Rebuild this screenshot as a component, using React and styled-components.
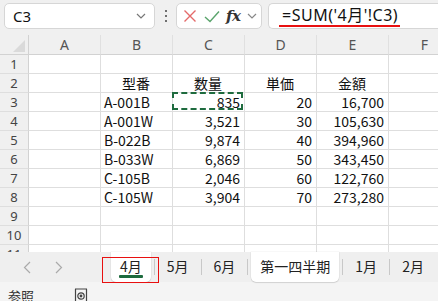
import React from "react";
import styled, { createGlobalStyle } from "styled-components";

const Global = createGlobalStyle`
  html, body { margin: 0; padding: 0; background: #f0f0f0; }
  body { font-family: "Noto Sans", "Noto Sans CJK JP", sans-serif; }
  * { box-sizing: border-box; }
`;

const Page = styled.div`
  width: 438px;
  height: 301px;
  display: flex;
  flex-direction: column;
  overflow: hidden;
  background: #f0f0f0;
`;

const FormulaBar = styled.div`
  height: 35px;
  flex: none;
  display: flex;
  align-items: flex-start;
  padding: 3px 0 0 4px;
`;

const Box = styled.div`
  height: 26px;
  background: #fff;
  border: 1px solid #d6d6d6;
  border-radius: 5px;
  display: flex;
  align-items: center;
  flex: none;
`;

const NameBox = styled(Box)`
  width: 151px;
  padding: 0 8px 0 8px;
  justify-content: space-between;
  font-size: 15px;
  color: #111;
`;

const Dots = styled.div`
  width: 21px;
  height: 26px;
  display: flex;
  flex-direction: column;
  align-items: center;
  justify-content: center;
  gap: 3px;
  flex: none;
  span {
    width: 2px;
    height: 2px;
    background: #444;
    border-radius: 1px;
  }
`;

const FuncBox = styled(Box)`
  width: 86px;
  padding: 0 4px 0 6px;
  justify-content: space-between;
`;

const Fx = styled.span`
  font-family: "DejaVu Serif", "Liberation Serif", serif;
  font-style: italic;
  font-weight: 600;
  font-size: 15px;
  color: #333;
  letter-spacing: -0.5px;
`;

const FormulaBox = styled(Box)`
  margin-left: 6px;
  flex: 1;
  border-right: none;
  border-radius: 5px 0 0 5px;
  padding-left: 10px;
`;

const FormulaText = styled.span`
  font-size: 16px;
  letter-spacing: 0.5px;
  color: #111;
  padding: 0 2px 0 3px;
  border-bottom: 2px solid #e81010;
  line-height: 19px;
  margin-top: 1px;
`;

const Sheet = styled.div`
  flex: 1;
  overflow: hidden;
  background: #fff;
  display: grid;
  grid-template-columns: 29px repeat(6, 72px);
  grid-template-rows: 20px;
  grid-auto-rows: 19px;
  align-content: start;
`;

const Corner = styled.div`
  background: #f0f0f0;
  border-right: 1px solid #d2d2d2;
  border-bottom: 1px solid #d2d2d2;
  display: flex;
  align-items: flex-end;
  justify-content: flex-end;
  padding: 0 3px 2px 0;
`;

const ColHead = styled.div`
  background: #f0f0f0;
  border-bottom: 1px solid #d2d2d2;
  border-right: 1px solid #e0e0e0;
  color: #555;
  font-size: 14px;
  display: flex;
  align-items: center;
  justify-content: center;
  line-height: 1;
  padding-top: 1px;
`;

const RowHead = styled.div`
  background: #f0f0f0;
  border-right: 1px solid #d2d2d2;
  border-bottom: 1px solid #dedede;
  color: #444;
  font-size: 13px;
  display: flex;
  align-items: center;
  justify-content: center;
  line-height: 1;
`;

const Cell = styled.div`
  position: relative;
  border-right: 1px solid #dedede;
  border-bottom: 1px solid #dedede;
  font-family: "Noto Sans CJK JP", sans-serif;
  font-size: 14px;
  color: #111;
  display: flex;
  align-items: center;
  line-height: 18px;
  padding: 0 4px 0 3px;
  white-space: nowrap;
  justify-content: ${(p) =>
    p.$align === "right" ? "flex-end" : p.$align === "center" ? "center" : "flex-start"};
`;

const Marquee = styled.div`
  position: absolute;
  left: -1px;
  top: -1px;
  right: 1px;
  bottom: 1px;
  border: 2px dashed #1e6b3e;
  pointer-events: none;
`;

const TabBar = styled.div`
  height: 30px;
  flex: none;
  background: #efefef;
  display: flex;
  align-items: stretch;
`;

const Nav = styled.div`
  width: 108px;
  flex: none;
  display: flex;
  align-items: center;
  padding-left: 23px;
  gap: 24px;
`;

const TabList = styled.div`
  display: flex;
  align-items: stretch;
  flex: none;
`;

const Tab = styled.div`
  position: relative;
  padding: 0 3px;
  display: flex;
  align-items: stretch;
`;

const TabLabel = styled.div`
  position: relative;
  padding: 0 9px 2px;
  display: flex;
  align-items: center;
  font-family: "Noto Sans CJK JP", sans-serif;
  font-size: 14px;
  color: #222;
  background: ${(p) => (p.$white ? "#fff" : "transparent")};
  border-radius: 0 0 5px 5px;
  box-shadow: ${(p) => (p.$white ? "0 1px 1px rgba(0,0,0,0.12), 0 0 0 0.5px rgba(0,0,0,0.06)" : "none")};
`;

const Underline = styled.div`
  position: absolute;
  left: 8px;
  right: 8px;
  bottom: 4px;
  height: 3px;
  background: #1e6b3e;
  border-radius: 1px;
`;

const Annotation = styled.div`
  position: absolute;
  left: -6px;
  right: -5px;
  top: 5px;
  bottom: -1px;
  border: 1.5px solid #e81010;
  pointer-events: none;
`;

const Sep = styled.div`
  width: 1px;
  height: 16px;
  align-self: center;
  background: #c8c8c8;
  flex: none;
`;

const StatusBar = styled.div`
  height: 19px;
  flex: none;
  background: #f4f4f4;
  display: flex;
  align-items: flex-start;
  padding: 6px 0 0 8px;
  gap: 40px;
  font-family: "Noto Sans CJK JP", sans-serif;
  font-size: 13px;
  color: #333;
  line-height: 16px;
`;

const columns = ["A", "B", "C", "D", "E", "F"];

const data = [
  ["A-001B", "835", "20", "16,700"],
  ["A-001W", "3,521", "30", "105,630"],
  ["B-022B", "9,874", "40", "394,960"],
  ["B-033W", "6,869", "50", "343,450"],
  ["C-105B", "2,046", "60", "122,760"],
  ["C-105W", "3,904", "70", "273,280"],
];

function buildRow(r) {
  if (r === 2) {
    return [
      { t: "" },
      { t: "型番", a: "center" },
      { t: "数量", a: "center" },
      { t: "単価", a: "center" },
      { t: "金額", a: "center" },
      { t: "" },
    ];
  }
  if (r >= 3 && r <= 8) {
    const d = data[r - 3];
    return [
      { t: "" },
      { t: d[0], a: "left" },
      { t: d[1], a: "right", sel: r === 3 },
      { t: d[2], a: "right" },
      { t: d[3], a: "right" },
      { t: "" },
    ];
  }
  return columns.map(() => ({ t: "" }));
}

const Chevron = ({ color = "#777" }) => (
  <svg width="10" height="6" viewBox="0 0 10 6">
    <path d="M1 1 L5 5 L9 1" fill="none" stroke={color} strokeWidth="1.2" />
  </svg>
);

const tabs = [
  { name: "4月", white: true, active: true, note: true },
  { name: "5月" },
  { name: "6月" },
  { name: "第一四半期", white: true },
  { name: "1月" },
  { name: "2月" },
];

export default function App() {
  const rows = Array.from({ length: 11 }, (_, i) => i + 1);
  return (
    <Page>
      <Global />
      <FormulaBar>
        <NameBox>
          <span>C3</span>
          <Chevron />
        </NameBox>
        <Dots>
          <span />
          <span />
          <span />
        </Dots>
        <FuncBox>
          <svg width="14" height="14" viewBox="0 0 14 14">
            <path d="M1.5 1.5 L12.5 12.5 M12.5 1.5 L1.5 12.5" stroke="#e46a6a" strokeWidth="1.4" fill="none" />
          </svg>
          <svg width="16" height="13" viewBox="0 0 16 13">
            <path d="M1 7 L6 11.5 L15 1.5" stroke="#5aa46c" strokeWidth="1.4" fill="none" />
          </svg>
          <Fx>fx</Fx>
          <Chevron color="#888" />
        </FuncBox>
        <FormulaBox>
          <FormulaText>=SUM('4月'!C3)</FormulaText>
        </FormulaBox>
      </FormulaBar>
      <Sheet>
        <Corner>
          <svg width="12" height="12" viewBox="0 0 12 12">
            <path d="M12 0 L12 12 L0 12 Z" fill="#dadada" />
          </svg>
        </Corner>
        {columns.map((c) => (
          <ColHead key={c}>{c}</ColHead>
        ))}
        {rows.map((r) => (
          <React.Fragment key={r}>
            <RowHead>{r}</RowHead>
            {buildRow(r).map((cell, i) => (
              <Cell key={i} $align={cell.a}>
                {cell.t}
                {cell.sel && <Marquee />}
              </Cell>
            ))}
          </React.Fragment>
        ))}
      </Sheet>
      <TabBar>
        <Nav>
          <svg width="8" height="13" viewBox="0 0 8 13">
            <path d="M7 1 L1.5 6.5 L7 12" fill="none" stroke="#aaa" strokeWidth="1.2" />
          </svg>
          <svg width="8" height="13" viewBox="0 0 8 13">
            <path d="M1 1 L6.5 6.5 L1 12" fill="none" stroke="#aaa" strokeWidth="1.2" />
          </svg>
        </Nav>
        <TabList>
          {tabs.map((t, i) => (
            <React.Fragment key={t.name}>
              {i > 0 && <Sep />}
              <Tab>
                <TabLabel $white={t.white}>
                  {t.name}
                  {t.active && <Underline />}
                </TabLabel>
                {t.note && <Annotation />}
              </Tab>
            </React.Fragment>
          ))}
        </TabList>
      </TabBar>
      <StatusBar>
        <span>参照</span>
        <svg width="14" height="14" viewBox="0 0 14 14">
          <path d="M1 1 H13 M1.5 1 V13 M12.5 1 V13" stroke="#444" strokeWidth="1.2" fill="none" />
          <circle cx="7" cy="8" r="3.2" stroke="#444" strokeWidth="1.2" fill="none" />
          <circle cx="7" cy="8" r="1.4" fill="#444" />
        </svg>
      </StatusBar>
    </Page>
  );
}
